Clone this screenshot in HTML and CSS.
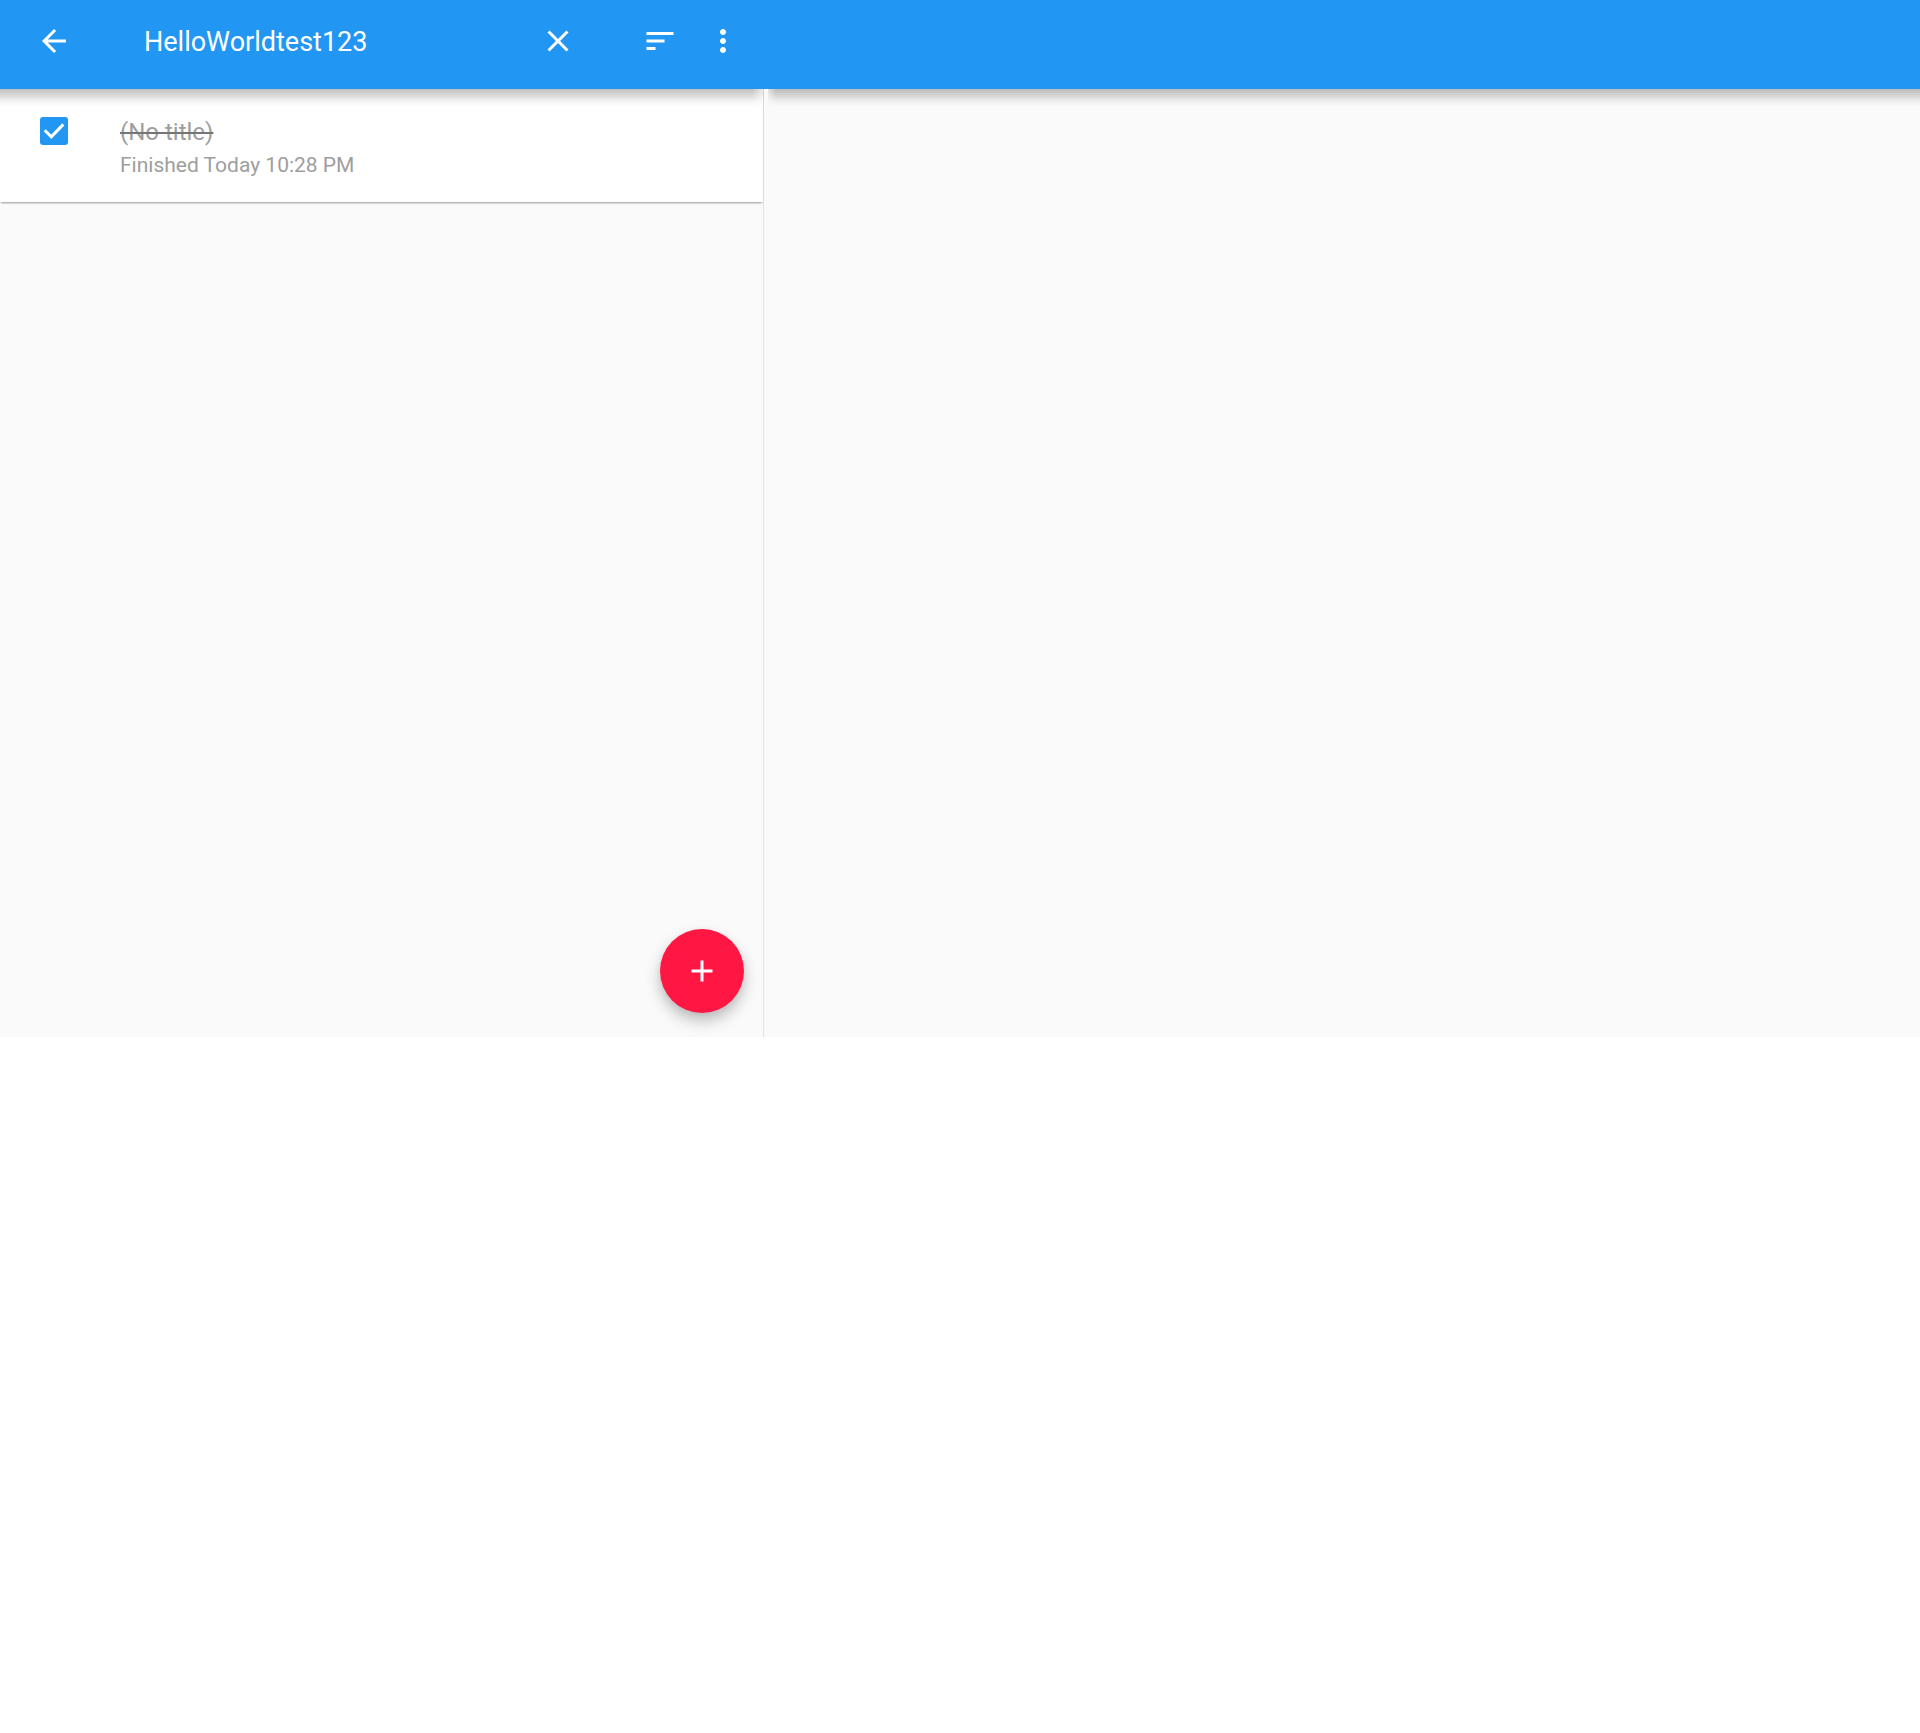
FILE: index.html
```html
<!DOCTYPE html>
<html lang="en">
<head>
<meta charset="utf-8">
<meta name="viewport" content="width=device-width, initial-scale=1">
<title>Tasks</title>
<link rel="stylesheet" href="styles.css">
</head>
<body>
<div class="app">
  <section class="pane list-pane">
    <header class="bar">
      <button class="icon-button back" type="button" aria-label="Back">
        <svg class="icon" viewBox="0 0 24 24"><path d="M20 11H7.83l5.59-5.59L12 4l-8 8 8 8 1.41-1.41L7.83 13H20v-2z"/></svg>
      </button>
      <input class="search" type="text" value="HelloWorldtest123" aria-label="Search tasks">
      <button class="icon-button clear" type="button" aria-label="Clear search">
        <svg class="icon" viewBox="0 0 24 24"><path d="M19 6.41L17.59 5 12 10.59 6.41 5 5 6.41 10.59 12 5 17.59 6.41 19 12 13.41 17.59 19 19 17.59 13.41 12z"/></svg>
      </button>
      <button class="icon-button" type="button" aria-label="Sort">
        <svg class="icon" viewBox="0 0 24 24"><path d="M3 18h6v-2H3v2zM3 6v2h18V6H3zm0 7h12v-2H3v2z"/></svg>
      </button>
      <button class="icon-button more" type="button" aria-label="More options">
        <svg class="icon" viewBox="0 0 24 24"><path d="M12 8c1.1 0 2-.9 2-2s-.9-2-2-2-2 .9-2 2 .9 2 2 2zm0 2c-1.1 0-2 .9-2 2s.9 2 2 2 2-.9 2-2-.9-2-2-2zm0 6c-1.1 0-2 .9-2 2s.9 2 2 2 2-.9 2-2-.9-2-2-2z"/></svg>
      </button>
    </header>
    <main class="tasks">
      <article class="task">
        <span class="check">
          <input class="check-box" type="checkbox" id="task-1" checked>
          <svg class="check-mark" viewBox="0 0 28 28"><path d="M4.7 13.2l6.6 6.6L23.3 7.4"/></svg>
        </span>
        <div class="task-text">
          <label class="task-title" for="task-1">(No title)</label>
          <p class="task-date">Finished Today 10:28 PM</p>
        </div>
      </article>
    </main>
    <button class="add" type="button" aria-label="Add task">
      <svg class="icon" viewBox="0 0 24 24"><path d="M19 13h-6v6h-2v-6H5v-2h6V5h2v6h6v2z"/></svg>
    </button>
  </section>
  <section class="pane detail-pane" aria-label="Task details">
    <header class="bar"></header>
  </section>
</div>
</body>
</html>
```

FILE: styles.css
```css
* {
  box-sizing: border-box;
}

body {
  margin: 0;
  background: #fff;
  font-family: Roboto, "Liberation Sans", sans-serif;
}

.app {
  display: flex;
  aspect-ratio: 1920 / 1037;
  background: #fafafa;
}

.pane {
  display: flex;
  flex-direction: column;
}

.list-pane {
  flex: 0 0 764px;
}

.detail-pane {
  flex: 1;
  min-width: 0;
}

.bar {
  position: relative;
  display: flex;
  align-items: center;
  height: 89px;
  padding-bottom: 7px;
  background: #2196f3;
}

.list-pane .bar {
  padding-right: 14px;
}

/* Shadow under each bar, faded out where the two panes meet */
.bar::after {
  content: "";
  position: absolute;
  top: 100%;
  left: 0;
  right: 0;
  height: 18px;
  background: linear-gradient(rgba(0, 0, 0, 0.25), rgba(0, 0, 0, 0.15) 35%, rgba(0, 0, 0, 0.04) 70%, transparent);
  pointer-events: none;
}

.list-pane .bar::after {
  mask-image: linear-gradient(to left, rgba(0, 0, 0, 0.3), #000 12px);
}

.detail-pane .bar::after {
  left: 4px;
  mask-image: linear-gradient(to right, rgba(0, 0, 0, 0.4), #000 8px);
}

button {
  display: flex;
  align-items: center;
  justify-content: center;
  padding: 0;
  border: 0;
  background: none;
  cursor: pointer;
}

.icon {
  width: 36px;
  height: 36px;
  fill: #fff;
}

.icon-button {
  flex: none;
  width: 72px;
  height: 72px;
}

.back {
  width: 108px;
}

.clear {
  margin-right: 30px;
}

.more {
  width: 54px;
}

.search {
  flex: 1;
  min-width: 0;
  height: 54px;
  padding: 2px 0 0 36px;
  border: 0;
  outline: 0;
  background: none;
  color: #fff;
  font: 27px/36px Roboto, "Liberation Sans", sans-serif;
}

.tasks {
  flex: 1;
  border-right: 1px solid #e2e2e2;
}

.task {
  display: flex;
  gap: 52px;
  padding: 25px 24px 21px 40px;
  background: #fff;
  box-shadow: 0 2px 2px -1px rgba(0, 0, 0, 0.4);
}

.check {
  display: grid;
  flex: none;
  width: 28px;
  height: 28px;
  margin-top: 3px;
}

.check-box,
.check-mark {
  grid-area: 1 / 1;
  width: 28px;
  height: 28px;
  margin: 0;
}

.check-box {
  appearance: none;
  border-radius: 3px;
  background: #2196f3;
}

.check-mark {
  fill: none;
  stroke: #fff;
  stroke-width: 3;
  pointer-events: none;
}

.task-title {
  display: block;
  color: #9e9e9e;
  font-size: 24px;
  line-height: 36px;
  text-decoration: line-through 2px #757575;
}

.task-date {
  margin: 0;
  color: #9e9e9e;
  font-size: 21px;
  line-height: 31px;
}

.add {
  align-self: flex-end;
  width: 84px;
  height: 84px;
  margin: -108px 20px 24px 0;
  border-radius: 50%;
  background: #ff1744;
  box-shadow: 0 8px 15px rgba(0, 0, 0, 0.24), 0 2px 6px rgba(0, 0, 0, 0.06);
}
```
